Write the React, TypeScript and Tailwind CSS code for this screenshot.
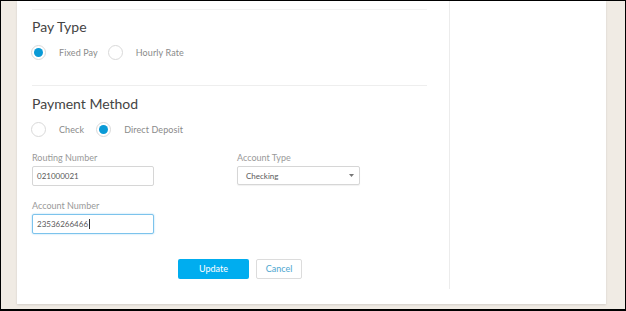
function Radio({ checked, label }: { checked?: boolean; label: string }) {
  return (
    <label className="flex items-center">
      <span className="flex h-[15px] w-[15px] items-center justify-center rounded-full border border-[#d9d9d9] bg-white">
        {checked && <span className="h-[9px] w-[9px] rounded-full bg-[#0a9ad6]" />}
      </span>
      <span className="ml-[13px] text-[9px] tracking-[0.1px] text-[#8a8a8a]">{label}</span>
    </label>
  );
}

function Field({ label, value, focused }: { label: string; value: string; focused?: boolean }) {
  return (
    <div className="w-[122px]">
      <div className="h-[12px] text-[9px] leading-[12px] text-[#999]">{label}</div>
      <div
        className={`mt-[2px] flex h-[20px] items-center rounded-[2px] border bg-white px-[4px] text-[8px] text-[#5a5a5a] ${
          focused ? "h-[19px] border-[#7cc3ec] shadow-[0_0_2px_#9fd3f2]" : "border-[#d6d6d6]"
        }`}
      >
        {value}
        {focused && <span className="ml-px h-[10px] w-px bg-[#333]" />}
      </div>
    </div>
  );
}

export default function App() {
  return (
    <div className="h-[311px] w-[626px] bg-black pt-px pl-px pr-px pb-[2px] font-['Lato',sans-serif]">
      <div className="flex h-full bg-[#f0ebe4] pl-[16px] pr-[19px] pb-[5px]">
        <div className="flex flex-1 bg-white shadow-[0_1px_2px_rgba(0,0,0,0.12)]">
          <div className="h-[288px] w-[433px] border-r border-[#ececec] pl-[15px] pr-[22px]">
            <div className="mt-[8px] h-px bg-[#f3f3f3]" />
            <h2 className="mt-[7px] h-[20px] text-[14px] leading-[20px] text-[#444]">Pay Type</h2>
            <div className="-ml-px mt-[8px] flex gap-[10px]">
              <Radio checked label="Fixed Pay" />
              <Radio label="Hourly Rate" />
            </div>
            <div className="mt-[25px] h-px bg-[#eeeeee]" />
            <h2 className="mt-[8px] h-[20px] text-[14px] leading-[20px] text-[#444]">Payment Method</h2>
            <div className="-ml-px mt-[8px] flex gap-[12px]">
              <Radio label="Check" />
              <Radio checked label="Direct Deposit" />
            </div>
            <div className="mt-[15px] flex gap-[83px]">
              <Field label="Routing Number" value="021000021" />
              <div className="w-[123px]">
                <div className="h-[12px] text-[9px] leading-[12px] text-[#999]">Account Type</div>
                <div className="mt-[2px] flex h-[19px] items-center justify-between rounded-[2px] border border-[#d6d6d6] bg-white pl-[8px] pr-[5px] text-[8px] text-[#5a5a5a] shadow-[0_1px_1px_rgba(0,0,0,0.06)]">
                  Checking
                  <svg width="5" height="3" viewBox="0 0 5 3">
                    <path d="M0 0h5L2.5 3z" fill="#777" />
                  </svg>
                </div>
              </div>
            </div>
            <div className="mt-[14px]">
              <Field label="Account Number" value="23536266466" focused />
            </div>
            <div className="mt-[25px] flex gap-[7px] pl-[146px]">
              <button className="h-[20px] w-[71px] rounded-[2px] bg-[#00adef] text-[9px] text-white">Update</button>
              <button className="h-[20px] w-[46px] rounded-[2px] border border-[#dcdcdc] bg-white text-[9px] text-[#4da6cf]">
                Cancel
              </button>
            </div>
          </div>
          <div className="flex-1" />
        </div>
      </div>
    </div>
  );
}
